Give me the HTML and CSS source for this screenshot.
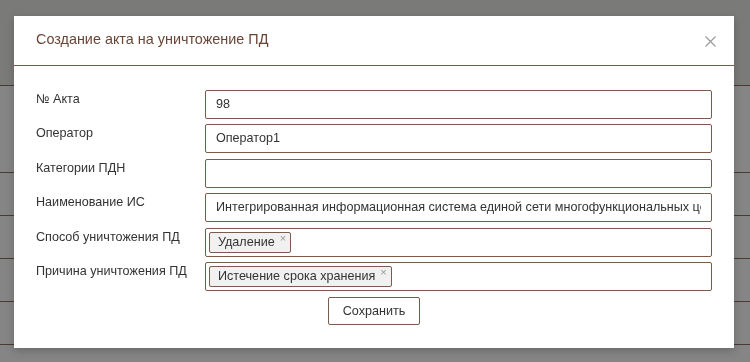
FILE: index.html
```html
<!DOCTYPE html>
<html lang="ru">
<head>
    <meta charset="UTF-8">
    <title>Создание акта на уничтожение ПД</title>
    <link rel="stylesheet" href="styles.css">
</head>
<body>
    <div class="page">
        <div class="page-head"></div>
        <div class="page-row tall"></div>
        <div class="page-row"></div>
        <div class="page-row"></div>
        <div class="page-row"></div>
        <div class="page-row"></div>
    </div>

    <div class="overlay">
        <div class="modal">
            <div class="modal-header">
                <h1>Создание акта на уничтожение ПД</h1>
                <span class="close">
                    <svg width="11" height="11" viewBox="0 0 11 11">
                        <path d="M0.5 0.5 L10.5 10.5 M10.5 0.5 L0.5 10.5" stroke="#9a9a9a" stroke-width="1.2" fill="none"/>
                    </svg>
                </span>
            </div>
            <div class="modal-body">
                <div class="form">
                    <label>№ Акта</label>
                    <div class="field"><span class="value">98</span></div>

                    <label>Оператор</label>
                    <div class="field"><span class="value">Оператор1</span></div>

                    <label>Категории ПДН</label>
                    <div class="field"><span class="value"></span></div>

                    <label>Наименование ИС</label>
                    <div class="field"><span class="value">Интегрированная информационная система единой сети многофункциональных центров</span></div>

                    <label>Способ уничтожения ПД</label>
                    <div class="field tags">
                        <span class="tag">Удаление<span class="tag-x">×</span></span>
                    </div>

                    <label>Причина уничтожения ПД</label>
                    <div class="field tags">
                        <span class="tag">Истечение срока хранения<span class="tag-x">×</span></span>
                    </div>
                </div>
                <div class="actions">
                    <button class="btn">Сохранить</button>
                </div>
            </div>
        </div>
    </div>
</body>
</html>
```

FILE: styles.css
```css
body {
    margin: 0;
    font-family: 'Liberation Sans', Arial, sans-serif;
    background-color: #858585;
    color: #333;
    height: 362px;
    overflow: hidden;
}

.page-head {
    height: 85px;
    background-color: #7a7a79;
    border-bottom: 1px solid #4b3a33;
}

.page-row {
    height: 42px;
    border-bottom: 1px solid #4b3a33;
}

.page-row.tall {
    height: 86px;
}

.overlay {
    position: fixed;
    top: 0;
    left: 0;
    right: 0;
    bottom: 0;
    padding: 16px 0 0 14px;
}

.modal {
    width: 720px;
    background-color: #fff;
    box-shadow: 0 3px 8px rgba(0, 0, 0, 0.2);
}

.modal-header {
    height: 49px;
    padding: 0 18px 0 22px;
    display: flex;
    align-items: center;
    justify-content: space-between;
    border-bottom: 1px solid #7d5a4c;
}

.modal-header h1 {
    margin: 0;
    font-size: 14.4px;
    font-weight: normal;
    color: #6a4535;
    padding-bottom: 3px;
}

.close {
    display: flex;
    margin-top: 2px;
}

.modal-body {
    padding: 24px 22px 23px;
}

.form {
    display: grid;
    grid-template-columns: 169px 507px;
    row-gap: 5.4px;
}

.form label {
    font-size: 12.6px;
    line-height: 18px;
}

.field {
    box-sizing: border-box;
    height: 29px;
    border: 1px solid #7d5a4c;
    border-radius: 2px;
    padding: 0 10px;
    font-size: 12.6px;
    line-height: 27px;
}

.value {
    display: block;
    white-space: nowrap;
    overflow: hidden;
}

.field.tags {
    padding: 3px 3px;
    line-height: normal;
}

.tag {
    display: inline-block;
    box-sizing: border-box;
    height: 21px;
    padding: 0 4px 0 8px;
    background-color: #f1f1f1;
    border: 1px solid #7d5a4c;
    border-radius: 2px;
    font-size: 12.6px;
    line-height: 19px;
}

.tag-x {
    display: inline-block;
    vertical-align: top;
    margin-left: 5px;
    font-size: 11px;
    line-height: 11px;
    color: #999;
}

.actions {
    display: flex;
    justify-content: center;
    margin-top: 6px;
}

.btn {
    width: 92px;
    height: 28px;
    background-color: #fff;
    border: 1px solid #7d5a4c;
    border-radius: 2px;
    font-family: 'Liberation Sans', Arial, sans-serif;
    font-size: 12.6px;
    color: #333;
    padding: 0;
}
```
